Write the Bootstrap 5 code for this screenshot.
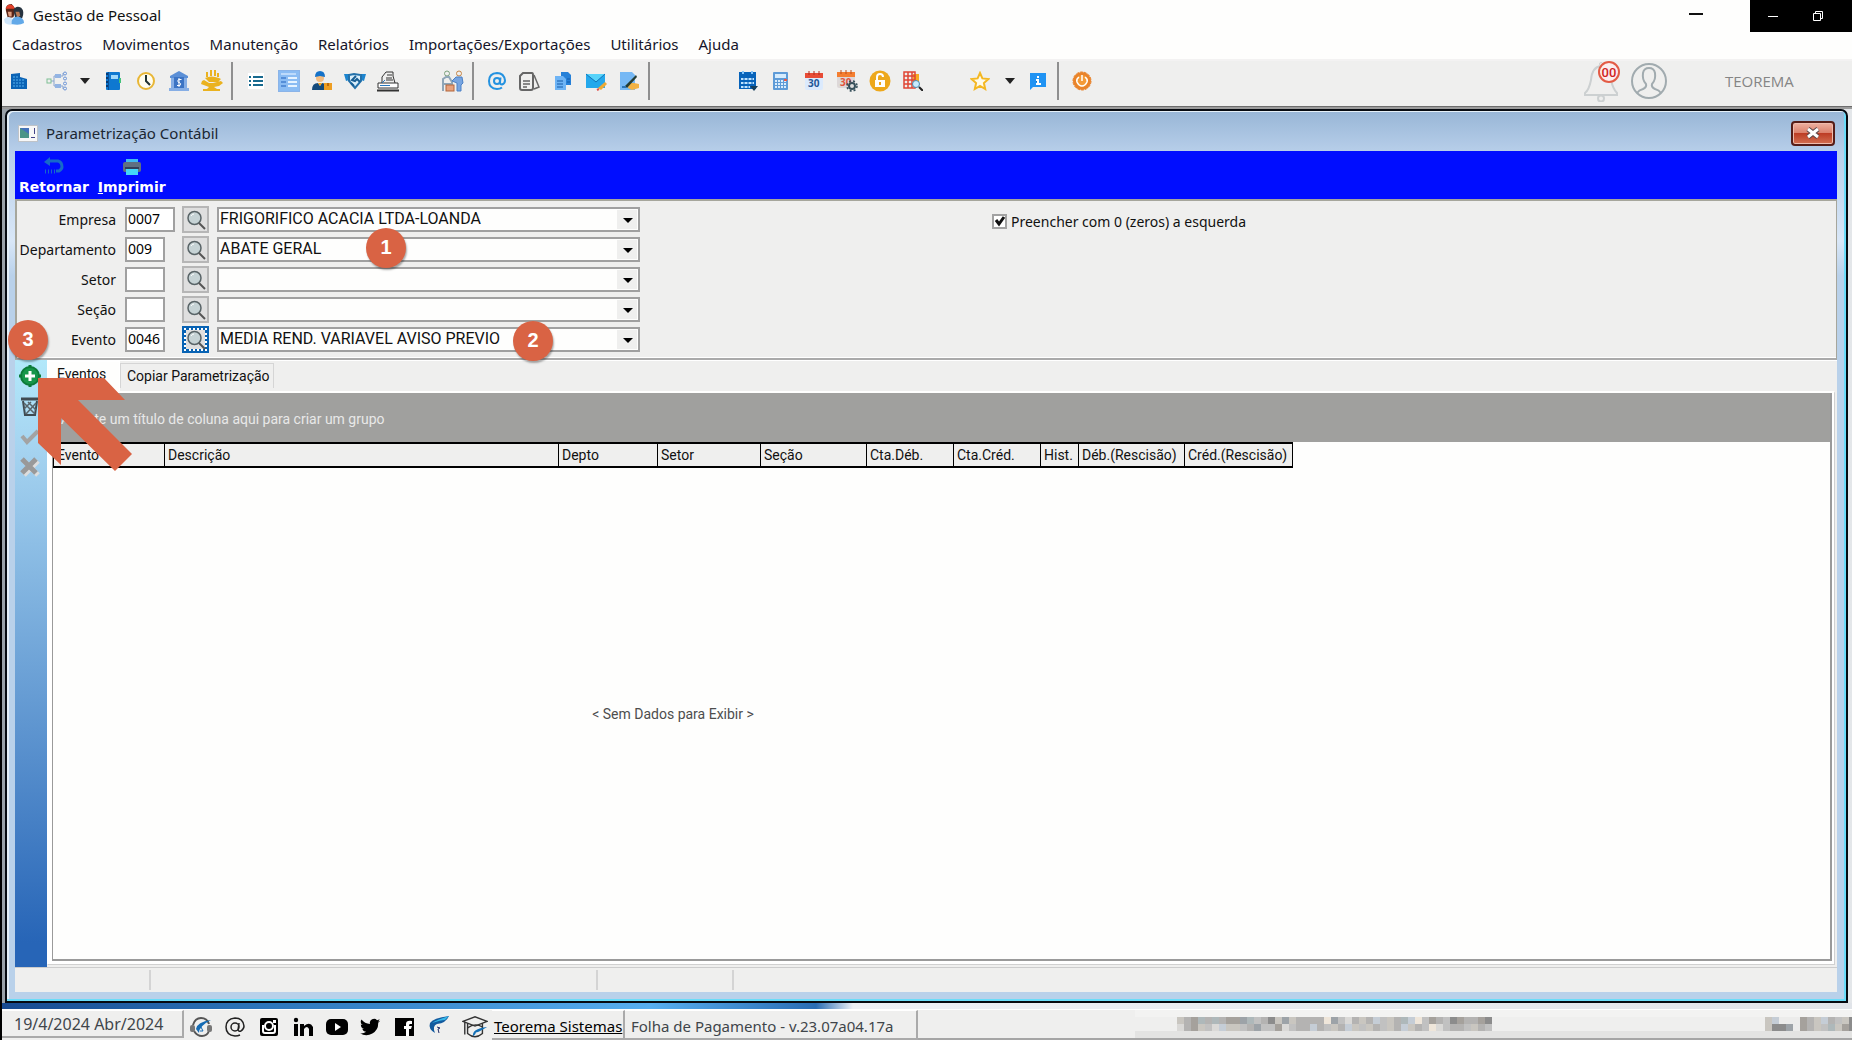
<!DOCTYPE html>
<html lang="pt-BR">
<head>
<meta charset="utf-8">
<meta name="viewport" content="width=device-width, initial-scale=1">
<title>Gestão de Pessoal</title>
<link rel="stylesheet" href="https://cdn.jsdelivr.net/npm/bootstrap@5.3.0/dist/css/bootstrap.min.css">
<script src="https://cdn.jsdelivr.net/npm/bootstrap@5.3.0/dist/js/bootstrap.bundle.min.js"></script>
<style>
  :root { --face: #efefee; --edge: #a0a0a0; --mark: #d96344; }
  body { font-family: "Noto Sans", "Open Sans", sans-serif; font-size: 15px; line-height: 20px; color: #111; background: #fefefd; border-left: 2px solid #000; }
  button { border: 0; background: none; padding: 0; color: inherit; }
  svg { display: block; flex: none; }
  .shrinkable { min-height: 0; min-width: 0; }
  .app-title { height: 32px; }
  .app-name { gap: 8px; padding: 3px 0 0 2px; }
  .dash-btn { margin: 13px 47px 0 0; }
  .win-ctl { width: 102px; height: 32px; background: #000; gap: 34px; padding-left: 18px; }
  .menu-bar { height: 27px; padding: 2px 0 0 10px; gap: 20px; color: #15152a; }
  .tool-strip { height: 47px; background: var(--face); border-top: 2px solid #f3f2f2; gap: 1px; padding: 0 0 5px 1px; }
  .tool-strip > button { width: 32px; height: 32px; display: flex; align-items: center; justify-content: center; flex: none; }
  .tool-strip > .drop-btn { width: 22px; }
  .tool-strip > .gap-xs { margin-left: 5px; }
  .tool-strip > .gap-md { margin-left: 32px; }
  .tool-strip > .gap-lg { margin-left: 75px; }
  .tool-sep { width: 2px; height: 38px; background: #8f8f8f; margin: 0 6px 0 2px; flex: none; }
  .bell-group { gap: 8px; }
  .user-tag { font-family: "Open Sans", sans-serif; color: #858585; width: 127px; margin-left: 50px; }
  .mdi-area { background: linear-gradient(90deg, #99a1a8, #e4e7ea); border-top: 1px solid #6c6c6c; padding: 2px 4px 0 3px; box-shadow: inset 0 2px #9b9b9b; }
  .mdi-win { border: 2px solid #060a10; border-radius: 7px 7px 0 0; background: linear-gradient(#98b6d6, #b8cfea 42px, #d9e7f7 130px, #b9d1ea 165px); box-shadow: inset -2px -2px #6bdcf8, inset 2px 1px #e5f0f8; padding: 0 9px 9px 8px; }
  .mdi-title { height: 40px; padding: 4px 0 0 3px; color: #1b2733; }
  .close-btn { width: 44px; height: 25px; border: 2px solid #561d17; border-radius: 4px; background: linear-gradient(#eeb1a1, #db806b 48%, #bd3d25 50%, #d37052); box-shadow: inset 0 0 0 1px #f0bcae; margin-right: 2px; }
  .cmd-bar { height: 48px; background: #000dff; color: #fff; gap: 9px; padding: 6px 4px 0; }
  .cmd-bar button { display: flex; flex-direction: column; align-items: center; gap: 1px; align-self: flex-start; font: bold 14px/18px "DejaVu Sans", sans-serif; }
  .client { background: var(--face); }
  .filter-box { border: 2px solid #a6a69c; border-right-width: 1px; border-bottom-color: #aaa; box-shadow: inset 0 -1px #fff; height: 161px; padding: 6px 0 0 0; }
  .frow { height: 25px; margin-bottom: 5px; }
  .field-label { width: 99px; text-align: right; margin-right: 9px; font-size: 14px; }
  .code-box { width: 40px; height: 25px; border: 2px solid var(--edge); padding: 0 0 2px 1px; font-size: 14px; background: #fff; border-radius: 0; }
  .code-box.wide-code { width: 50px; margin-right: -10px; }
  .find-btn { width: 27px; height: 27px; margin: 0 8px 0 17px; border: 2px solid #b6b6b6; background: #dfdfdf; display: flex; align-items: center; justify-content: center; flex: none; }
  .find-btn.on { border-color: #0863b4; outline: 2px dotted #fff; outline-offset: -4px; box-shadow: inset 0 0 0 2px #0863b4; }
  .combo { position: relative; width: 423px; height: 25px; }
  .combo select { appearance: none; width: 100%; height: 100%; border: 2px solid var(--edge); border-radius: 0; background: #fefefd; color: #111; padding: 0 24px 2px 1px; font: 16px/19px Roboto, sans-serif; opacity: 1; }
  .combo::before { content: ""; position: absolute; right: 3px; top: 3px; width: 20px; height: 19px; background: var(--face); pointer-events: none; }
  .combo::after { content: ""; position: absolute; right: 7px; top: 11px; border: 5px solid transparent; border-top: 5px solid #000; border-bottom: 0; pointer-events: none; }
  .fill-zero { margin: 4px 0 0 352px; gap: 4px; font-size: 14px; }
  .fill-zero input { display: block; appearance: none; width: 15px; height: 15px; margin: 0; border: 2px solid #a2a2a2; background: #fff; }
  .fill-zero span svg { position: absolute; left: 2px; top: 2px; pointer-events: none; }
  .side-strip { width: 32px; background: linear-gradient(#b2e8fa, #a5d3f0 15%, #2765b7 96%); padding: 5px 2px 0 0; gap: 10px; }
  .grid-text { font-family: Roboto, sans-serif; font-size: 14px; padding-bottom: 2px; }
  .tab-row { height: 31px; border-top: 1px solid #fff; }
  .tab-row button { height: 25px; border: 1px solid #d5d5d5; border-bottom: 0; padding: 0 3px 0 6px; margin-top: 2px; align-self: flex-start; }
  .tab-row .on { height: 31px; background: #fefefd; margin-top: 0; border-color: #fff; width: 73px; padding: 0 0 6px 9px; text-align: left; }
  .pane { border: 1px solid #d0d0d0; border-left-color: #fff; background: #fff; padding: 0 2px 3px 4px; border-top: 2px solid #fefefd; margin-right: 2px; }
  .grid-box { border: 2px solid #9a9a9a; border-top: 0; background: #fefefd; border-left-width: 1px; }
  .group-band { height: 49px; background: #a0a09e; color: #e8e8e8; padding: 2px 0 0 8px; }
  .data-grid { width: 1239px; border-collapse: collapse; table-layout: fixed; }
  .data-grid th { height: 24px; border: 2px solid #000; border-width: 2px 1px; background: var(--face); font-weight: 400; padding: 0 0 0 3px; white-space: nowrap; line-height: 20px; }
  .data-grid td { text-align: center; color: #4d4d4d; border: 0; }
  .win-status { height: 25px; background: var(--face); border-top: 1px solid #ccc; }
  .win-status span { border-right: 2px solid #d4d4d4; margin: 2px 0; width: 136px; }
  .win-status .wide-part { width: 447px; }
  .desk-gap { height: 6px; background: linear-gradient(90deg, #174a90, #2e78bd 15%, #58aff0 35%, #2a6db4 44%, #edf0f5 46%, #e1e4e9); }
  .foot { height: 31px; background: var(--face); border-top: 1px solid #fff; color: #40454a; }
  .foot-cell { height: 30px; border-right: 2px solid #aaa; border-bottom: 2px solid #aaa; border-top: 1px solid #fff; display: flex; align-items: center; flex: none; padding-top: 2px; }
  .date-cell { width: 182px; padding: 0 0 0 12px; font-size: 16px; height: 28px; }
  .brand-cell { width: 133px; padding-left: 2px; }
  .brand-cell a { color: #000; }
  .version-cell { width: 293px; padding-left: 6px; }
  .foot-icons { gap: 12px; width: 308px; padding: 4px 0 0 6px; }
  .foot-rest { border-bottom: 2px solid #a5a5a5; }
  .pin { position: absolute; width: 40px; height: 40px; border-radius: 50%; background: var(--mark); color: #fff; font: bold 20px/38px "Liberation Sans", sans-serif; text-align: center; box-shadow: 1px 2px 2px #0005; z-index: 5; pointer-events: none; }
  .pin-one { left: 364px; top: 228px; }
  .pin-two { left: 511px; top: 321px; }
  .pin-three { left: 6px; top: 320px; }
  .pointer-arrow { position: absolute; left: 36px; top: 378px; z-index: 4; pointer-events: none; }
</style>
</head>
<body class="vh-100 d-flex flex-column overflow-hidden position-relative">
<svg width="0" height="0" class="position-absolute"><symbol id="lens" viewBox="0 0 20 20"><circle cx="8.500" cy="8" r="6.500" fill="#c6d3d5" stroke="#596467" stroke-width="1.500"/><path d="M5 6q1-2 3-2" stroke="#fff" fill="none"/><path d="M13 13l6 6" stroke="#555" stroke-width="2"/></symbol></svg>

<header class="app-title d-flex align-items-start flex-shrink-0">
  <div class="app-name d-flex align-items-center flex-grow-1">
    <svg width="21" height="23" viewBox="0 0 22 24"><path d="M2 8Q1 1 8 1l4 5-2 9-6 1z" fill="#5a2517"/><path d="M2 5Q5-1 10 3l1 3H2z" fill="#e2402a"/><path d="M10 8Q12 2 18 5q4 4 1 11l-7 1z" fill="#26333f"/><path d="M12 9h4l1 4-3 3z" fill="#b97a55"/><path d="M4 9h4v5H5z" fill="#e0a080"/><path d="M0 17q4-4 8-1l3 6q-6 2-10-1z" fill="#cfe6fa"/><path d="M8 22q-1-7 6-8 7 1 7 7-5 3-13 1z" fill="#62a9e8"/></svg>
    <span>Gestão de Pessoal</span>
  </div>
  <button class="dash-btn" aria-label="Minimizar"><svg width="14" height="3"><path d="M0 1h14" stroke="#111" stroke-width="2"/></svg></button>
  <div class="win-ctl d-flex align-items-center">
    <button aria-label="Minimizar janela"><svg width="10" height="10"><path d="M0 5.500h10" stroke="#fff"/></svg></button>
    <button aria-label="Restaurar janela"><svg width="12" height="12" fill="none" stroke="#fff"><path d="M1.500 3.500h7v7h-7zM3.500 3.500v-2h7v7h-2"/></svg></button>
  </div>
</header>

<nav class="menu-bar d-flex align-items-start flex-shrink-0" aria-label="Menu principal">
  <button>Cadastros</button><button>Movimentos</button><button>Manutenção</button><button>Relatórios</button><button>Importações/Exportações</button><button>Utilitários</button><button>Ajuda</button>
</nav>

<div class="tool-strip d-flex align-items-center flex-shrink-0" role="toolbar" aria-label="Ferramentas">
  <button aria-label="Empresas"><svg width="18" height="18"><path d="M1 2l9-1v4l7 2v10H1z" fill="#0b63b5"/><path d="M3 5h6M3 8h12M3 11h12M3 14h12" stroke="#58b4f0" stroke-dasharray="2 1"/></svg></button>
  <button class="gap-xs" aria-label="Organograma"><svg width="22" height="20" fill="none"><path d="M5 10h3M8 10V5h3M8 10v5h3M14 5h3V2M14 15h3v3" stroke="#8aa4cc"/><rect x="1" y="8" width="4" height="4" stroke="#7ebf93"/><rect x="9" y="3" width="6" height="4" fill="#93b4e3"/><rect x="9" y="13" width="6" height="4" fill="#93b4e3"/><g stroke="#6b94d6"><circle cx="19" cy="2.500" r="1.500"/><circle cx="19" cy="7.500" r="1.500"/><circle cx="19" cy="12.500" r="1.500"/><circle cx="19" cy="17.500" r="1.500"/></g></svg></button>
  <button class="drop-btn" aria-label="Mais organogramas"><svg width="10" height="6"><path d="M0 0h10L5 6z" fill="#222"/></svg></button>
  <button aria-label="Agenda"><svg width="16" height="20"><rect x="1" y="1" width="14" height="18" rx="1" fill="#0e78d0"/><path d="M1 3h2M1 7h2M1 11h2M1 15h2" stroke="#073b75" stroke-width="2"/><path d="M3.500 1v18" stroke="#0a4f97"/><path d="M6 4h7v4H6z" fill="#9ed7fa"/><path d="M14 7h2v5h-2z" fill="#43c37a"/></svg></button>
  <button aria-label="Ponto"><svg width="20" height="20" fill="none"><circle cx="10" cy="10" r="8" fill="#fffdf0" stroke="#e8b635" stroke-width="2"/><path d="M10 4v6l4 4" stroke="#233" stroke-width="2"/></svg></button>
  <button aria-label="Banco"><svg width="20" height="22"><path d="M10 1l9 5v2H1V6z" fill="#5b8fd6"/><path d="M2 8h16v10H2zM0 18h20v3H0z" fill="#86aee5"/><rect x="5" y="7" width="10" height="11" fill="#3c74c4"/><path d="M12.500 9.500h-3q-1.500 1.500 0 3h1q2 1 .5 3H8M10 8v9" stroke="#fff" fill="none"/></svg></button>
  <button aria-label="Custos"><svg width="22" height="22" fill="#eab21f"><path d="M4 8q6-3 14 0l2 1-3 3H8zM3 10l5 3h4l8-2 2 2-4 3-5 1 3 2h3v2H2v-2h4l2-2-8-3 1-3z"/><path d="M6 2v5M10 0v6M14 0v6M17 3v4" stroke="#eab21f" stroke-width="2"/></svg></button>
  <span class="tool-sep"></span>
  <button aria-label="Lista"><svg width="16" height="16"><rect width="16" height="16" fill="#fff"/><path d="M1 4h2M1 8h2M1 12h2M5 4h10M5 8h10M5 12h10" stroke="#17698e" stroke-width="2"/></svg></button>
  <button aria-label="Formulário"><svg width="22" height="22"><rect x=".5" y=".5" width="21" height="21" fill="#8bbcf3" stroke="#8bb4e8"/><path d="M3 4h15" stroke="#bddafb" stroke-width="2"/><path d="M3 8h5M3 12h5M3 16h5" stroke="#558ed8" stroke-width="2"/><path d="M10 8h9M10 12h9M10 16h9" stroke="#e7f3ff" stroke-width="2"/></svg></button>
  <button aria-label="Funcionário"><svg width="20" height="20"><circle cx="8" cy="7" r="4" fill="#f3bd82"/><path d="M3 6q0-6 5-6t5 6l-5-1z" fill="#1572c8"/><path d="M0 19q0-7 6-7l2 3 2-3q5 0 5 7z" fill="#154a7b"/><path d="M6 12h4l-2 3z" fill="#f6a21d"/><rect x="12" y="12" width="8" height="7" fill="#ee9e22"/><path d="M15 12h2v3h-2z" fill="#bf6b0b"/></svg></button>
  <button aria-label="Acordo"><svg width="22" height="18" fill="none"><path d="M0 2h5v6l-3 1zM22 2h-5v6l3 1z" fill="#1d85cf"/><path d="M5 3l5-1 7 1v6l-6 7-6-7z" fill="#d9effc" stroke="#2371aa" stroke-width="2"/><path d="M12 4L8 8l3 1 2-2 3 3M7 11l3 3" stroke="#195f95" stroke-width="2"/></svg></button>
  <button aria-label="Relatórios impressos"><svg width="22" height="22" fill="none" stroke="#333"><path d="M5 13V7L9 2h7v4l2 7"/><path d="M10 5h5M9 8h6M9 10h7" /><path d="M1 13h20v5H1z" fill="#fff"/><path d="M0 20.500h22" stroke-width="2"/><path d="M3 15.500h10M5 13l3-3" stroke="#2878bd"/></svg></button>
  <button class="gap-md" aria-label="Rescisão"><svg width="22" height="22" fill="none"><circle cx="5" cy="3.500" r="2.500" stroke="#7ca17c"/><circle cx="17" cy="3.500" r="2.500" stroke="#c68546"/><path d="M1 21V9l3-2h3l3 5v9M1 14h8" stroke="#8fa6b8" stroke-width="2"/><path d="M14 7h6l1 6-2 2v6h-4v-8l-5-2z" fill="#77a5e1" stroke="#4c80c5"/><rect x="4" y="15" width="8" height="6" fill="#e8a17d" stroke="#b3663b"/></svg></button>
  <span class="tool-sep"></span>
  <button aria-label="E-mail"><svg width="18" height="18" viewBox="0 0 18 18" fill="none" stroke="#2492e0" stroke-width="2"><circle cx="9" cy="9" r="3"/><path d="M12.500 5.500l-.5 5q0 2 2 2 3-1 3-4Q16 1 9 1 1 1.500 1 9t8 8q3 0 5-1.500"/></svg></button>
  <button aria-label="Documentos"><svg width="22" height="20" fill="none" stroke="#666" stroke-width="2"><path d="M4 2h9q1 0 1 2v13q0 2-2 2H3q-2 0-2-2V5z"/><path d="M15 4l5 12-5 2M4 10h7M4 13h7M4 16h4" stroke-width="1.500"/></svg></button>
  <button aria-label="Copiar documentos"><svg width="18" height="20"><path d="M7 1h7l3 3v10H7z" fill="#2580d8"/><path d="M1 5h8l3 3v11H1z" fill="#6eb4f5"/><path d="M3 10h6M3 13h6M3 16h6M13 8h3M13 11h3" stroke="#145aa8"/></svg></button>
  <button aria-label="Mensagem"><svg width="22" height="20"><rect x="1" y="3" width="19" height="14" fill="#24a8ec"/><path d="M1 3h19l-9 8z" fill="#57d3fa"/><path d="M1 3l10 8 9-8" stroke="#1272b8" fill="none"/><path d="M13 17l7-6 2 2-6 6z" fill="#edaa35"/><path d="M12 19l2-1" stroke="#e3514c" stroke-width="2"/></svg></button>
  <button aria-label="Assinar"><svg width="20" height="20"><path d="M1 1h12l3 3v15H1z" fill="#76b8f4"/><path d="M10 12h5l5 1v4l-7 2-4-2z" fill="#f1b244"/><path d="M6 15L17 4l1 2L8 17z" fill="#253d35"/><path d="M3 15h4v2H3z" fill="#2b74b7"/></svg></button>
  <span class="tool-sep"></span>
  <button class="gap-lg" aria-label="Calendário"><svg width="20" height="20"><path d="M1 1h17v17H1z" fill="#0763ba"/><path d="M3 7h13v2H3zM3 11h13v2H3zM3 15h9v2H3z" fill="#bfe3ff"/><path d="M6 6v12M10 6v12M14 6v12" stroke="#0763ba"/><path d="M5 0v3M14 0v3" stroke="#82c4fa" stroke-width="2"/><path d="M12 15h8l-4 5z" fill="#17405d"/></svg></button>
  <button aria-label="Calculadora"><svg width="18" height="20"><rect x="1" y="1" width="15" height="18" rx="1" fill="#5e9bd7"/><path d="M3 3h11v4H3z" fill="#d6ecfd"/><path d="M4 9v8M7 9v8M10 9v8M13 9v8" stroke="#d9ecfc" stroke-width="2" stroke-dasharray="2 1"/><path d="M12 8h3v2h-3z" fill="#e85a48"/></svg></button>
  <button aria-label="Mês"><svg width="20" height="20"><rect x="1" y="2" width="18" height="17" rx="2" fill="#dbeafd"/><path d="M1 2h18v5H1z" fill="#e74c36"/><path d="M5 0v4M10 0v4M15 0v4" stroke="#b2291b"/><text x="4" y="16" font-family="Open Sans" font-size="10" font-weight="700" fill="#1f5797">30</text></svg></button>
  <button aria-label="Configurar mês"><svg width="22" height="22"><rect x="1" y="2" width="18" height="16" rx="2" fill="#ddd8d8"/><path d="M1 2h18v5H1z" fill="#f47e30"/><path d="M5 0v4M10 0v4M15 0v4" stroke="#bd4d17"/><text x="4" y="16" font-family="Open Sans" font-size="10" font-weight="700" fill="#e3553b">30</text><circle cx="16" cy="16" r="3" fill="#ddd" stroke="#37505b" stroke-width="2"/><circle cx="16" cy="16" r="5" fill="none" stroke="#37505b" stroke-width="1.500" stroke-dasharray="2 2"/></svg></button>
  <button aria-label="Liberar"><svg width="22" height="22"><circle cx="11" cy="11" r="10.500" fill="#eda81c"/><rect x="6" y="10" width="10" height="7" fill="#fff"/><path d="M8 10V7q0-3 3-3t3 3" fill="none" stroke="#fff" stroke-width="2"/><path d="M11 12v3" stroke="#eda81c" stroke-width="2"/></svg></button>
  <button aria-label="Consultar tabela"><svg width="20" height="20" fill="none"><path d="M10 3h6v8h-6z" fill="#f7aa23"/><path d="M1 1h11v16H1zM1 5h11M1 9h11M1 13h11M5 1v16M9 1v16" stroke="#e04635" stroke-width="1.500"/><circle cx="13" cy="13" r="3.500" fill="#c8ecff" stroke="#488aaf"/><path d="M16 16l4 4" stroke="#222" stroke-width="2"/></svg></button>
  <button class="gap-md ps-1" aria-label="Favoritos"><svg width="20" height="20" viewBox="0 0 20 20"><path d="M10 2l2.400 5.400 6 .6-4.500 4 1.300 6L10 15l-5.200 3 1.300-6L1.600 8l6-.6z" fill="#fffbe9" stroke="#f4b822" stroke-width="2"/></svg></button>
  <button class="drop-btn ms-1" aria-label="Mais favoritos"><svg width="10" height="6"><path d="M0 0h10L5 6z" fill="#222"/></svg></button>
  <button aria-label="Informações"><svg width="18" height="18"><path d="M1 1h16v14H4l-3 3z" fill="#2093f3"/><path d="M9 4v2M7 8h2v4M7 12h5" stroke="#fff" stroke-width="2"/></svg></button>
  <span class="tool-sep"></span>
  <button aria-label="Sair"><svg width="20" height="20" fill="none"><circle cx="10" cy="10" r="9" fill="#e9832a" stroke="#e9832a" stroke-dasharray="3 1"/><circle cx="10" cy="10" r="6" fill="#f49a37"/><path d="M7 6q-3 2-2 5 2 4 5 4t5-4q1-3-2-5M10 4v6" stroke="#fff" stroke-width="1.500"/></svg></button>
  <div class="bell-group d-flex align-items-center ms-auto">
    <button aria-label="Notificações"><svg width="40" height="42" fill="none"><path d="M2 33q4-3 6-13Q9 7 18 6q9 1 10 14 2 9 6 13v2H2z" stroke="#ccd0d1" stroke-width="2"/><circle cx="18" cy="38.500" r="3" stroke="#ccd0d1" stroke-width="2"/><circle cx="18" cy="4" r="1.500" stroke="#ccd0d1"/><circle cx="26" cy="12" r="10" fill="#fbeeee" stroke="#e35b45" stroke-width="2"/><text x="26" y="17" text-anchor="middle" font-family="Roboto" font-size="13" font-weight="500" fill="#d01f22">00</text></svg></button>
    <button aria-label="Usuário"><svg width="36" height="36" fill="none" stroke="#a1abaf" stroke-width="2"><circle cx="18" cy="18" r="17"/><path d="M6 30q2-3 6-4 4-2 3-5-4-4-3-11 1-5 6-5t6 5q1 7-3 11-1 3 3 5 4 1 6 4"/></svg></button>
    <span class="user-tag">TEOREMA</span>
  </div>
</div>

<main class="mdi-area shrinkable d-flex flex-column flex-grow-1">
  <section class="mdi-win shrinkable d-flex flex-column flex-grow-1">
    <div class="mdi-title d-flex align-items-center flex-shrink-0">
      <svg width="20" height="17" class="me-2"><rect x=".5" y=".5" width="19" height="16" fill="#f8f8f8" stroke="#bfc3c8"/><rect x="2" y="3" width="9" height="10" fill="#4c9587"/><path d="M2 3l9 6V3z" fill="#4471b9"/><path d="M16.500 3v6M13 12.500h4" stroke="#448"/></svg>
      <span class="flex-grow-1">Parametrização Contábil</span>
      <button class="close-btn d-flex align-items-center justify-content-center" aria-label="Fechar"><svg width="16" height="12" fill="none"><path d="M3 2l10 8M13 2L3 10" stroke="#59474a" stroke-width="5"/><path d="M3 2l10 8M13 2L3 10" stroke="#fff" stroke-width="3"/></svg></button>
    </div>
    <div class="cmd-bar d-flex flex-shrink-0">
      <button><svg width="20" height="20" fill="none"><path d="M5 4h9q4 1 4 6 0 2-3 4h-3" stroke="#176ac9" stroke-width="3"/><path d="M0 5l6-5v9z" fill="#176ac9"/><path d="M1 14.500h10" stroke="#176ac9" stroke-width="4" stroke-dasharray="1 2"/></svg><span>Retornar</span></button>
      <button><svg width="20" height="20"><path d="M4 2h12v6H4z" fill="#41b9ef"/><rect x="1" y="5" width="18" height="10" rx="2" fill="#607080"/><path d="M4 12h12v6H4z" fill="#43d6f8"/><path d="M3 11h14" stroke="#333f58" stroke-width="2"/></svg><span><u>I</u>mprimir</span></button>
    </div>

    <div class="client shrinkable d-flex flex-column flex-grow-1">
      <form class="filter-box flex-shrink-0">
        <div class="frow d-flex align-items-center">
          <label class="field-label" for="emp">Empresa</label><input id="emp" class="code-box wide-code" value="0007">
          <button type="button" class="find-btn" aria-label="Buscar empresa"><svg width="20" height="20"><use href="#lens"/></svg></button>
          <div class="combo"><select aria-label="Nome da empresa"><option>FRIGORIFICO ACACIA LTDA-LOANDA</option></select></div>
          <div class="fill-zero d-flex align-items-center"><span class="position-relative"><input type="checkbox" id="zero" checked><svg width="12" height="12" fill="none"><path d="M2 4l3 4 5-7" stroke="#111" stroke-width="3"/></svg></span><label for="zero">Preencher com 0 (zeros) a esquerda</label></div>
        </div>
        <div class="frow d-flex align-items-center">
          <label class="field-label" for="dep">Departamento</label><input id="dep" class="code-box" value="009">
          <button type="button" class="find-btn" aria-label="Buscar departamento"><svg width="20" height="20"><use href="#lens"/></svg></button>
          <div class="combo"><select aria-label="Nome do departamento"><option>ABATE GERAL</option></select></div>
        </div>
        <div class="frow d-flex align-items-center">
          <label class="field-label" for="set">Setor</label><input id="set" class="code-box">
          <button type="button" class="find-btn" aria-label="Buscar setor"><svg width="20" height="20"><use href="#lens"/></svg></button>
          <div class="combo"><select aria-label="Nome do setor"><option></option></select></div>
        </div>
        <div class="frow d-flex align-items-center">
          <label class="field-label" for="sec">Seção</label><input id="sec" class="code-box">
          <button type="button" class="find-btn" aria-label="Buscar seção"><svg width="20" height="20"><use href="#lens"/></svg></button>
          <div class="combo"><select aria-label="Nome da seção"><option></option></select></div>
        </div>
        <div class="frow d-flex align-items-center">
          <label class="field-label" for="eve">Evento</label><input id="eve" class="code-box" value="0046">
          <button type="button" class="find-btn on" aria-label="Buscar evento"><svg width="20" height="20"><use href="#lens"/></svg></button>
          <div class="combo"><select aria-label="Nome do evento"><option>MEDIA REND. VARIAVEL AVISO PREVIO</option></select></div>
        </div>
      </form>

      <div class="shrinkable d-flex flex-grow-1">
        <aside class="side-strip d-flex flex-column align-items-center flex-shrink-0">
          <button aria-label="Incluir"><svg width="22" height="22"><circle cx="11" cy="11" r="9" fill="#17964a" stroke="#0c7a38" stroke-width="2"/><path d="M11 0v2M11 20v2M0 11h2M20 11h2" stroke="#0c7a38" stroke-width="3"/><path d="M11 6v10M6 11h10" stroke="#fff" stroke-width="3"/></svg></button>
          <button aria-label="Excluir"><svg width="20" height="20" fill="none"><path d="M1 2h18" stroke="#404b51" stroke-width="3"/><path d="M3 4l2 14h10l2-14" stroke="#404b51" stroke-width="2"/><path d="M4 6l11 11M8 5l8 8M16 6L6 17M11 5l-7 7" stroke="#59646a" stroke-width="1.500"/></svg></button>
          <button aria-label="Confirmar"><svg width="20" height="20" fill="none"><path d="M2 9l5 6L18 4" stroke="#a3a3a3" stroke-width="4"/></svg></button>
          <button aria-label="Cancelar"><svg width="20" height="20" fill="none"><path d="M4 4l14 14M18 4L4 18" stroke="#ddd" stroke-width="5"/><path d="M2 2l14 14M16 2L2 16" stroke="#999" stroke-width="5"/></svg></button>
        </aside>
        <div class="grid-text shrinkable d-flex flex-column flex-grow-1">
          <div class="tab-row d-flex flex-shrink-0" role="tablist">
            <button class="on" role="tab" aria-selected="true">Eventos</button><button role="tab" aria-selected="false">Copiar Parametrização</button>
          </div>
          <div class="pane shrinkable d-flex flex-column flex-grow-1">
            <div class="grid-box shrinkable d-flex flex-column flex-grow-1">
              <div class="group-band d-flex align-items-center flex-shrink-0">Arraste um título de coluna aqui para criar um grupo</div>
              <table class="data-grid flex-grow-1">
                <colgroup><col style="width:111px"><col style="width:394px"><col style="width:99px"><col style="width:103px"><col style="width:106px"><col style="width:87px"><col style="width:87px"><col style="width:38px"><col style="width:106px"><col style="width:108px"></colgroup>
                <thead><tr><th>Evento</th><th>Descrição</th><th>Depto</th><th>Setor</th><th>Seção</th><th>Cta.Déb.</th><th>Cta.Créd.</th><th>Hist.</th><th>Déb.(Rescisão)</th><th>Créd.(Rescisão)</th></tr></thead>
                <tbody><tr><td colspan="10">&lt; Sem Dados para Exibir &gt;</td></tr></tbody>
              </table>
            </div>
          </div>
        </div>
      </div>
      <div class="win-status d-flex flex-shrink-0"><span></span><span class="wide-part"></span><span></span></div>
    </div>
  </section>
</main>
<div class="desk-gap flex-shrink-0"></div>

<footer class="foot d-flex align-items-start flex-shrink-0">
  <div class="foot-cell date-cell">19/4/2024 Abr/2024</div>
  <div class="foot-icons d-flex align-items-center h-100 flex-shrink-0">
    <a href="#" aria-label="Suporte"><svg width="22" height="22" fill="none"><path d="M3 9Q5 2 11 2t8 6M4 15q3 5 8 5 5 0 7-5" stroke="#555" stroke-width="2"/><rect x="0" y="9" width="5" height="7" rx="2" fill="#777"/><rect x="17" y="9" width="5" height="7" rx="2" fill="#777"/><path d="M21 4Q7 6 6 13l3 4q0-7 12-13z" fill="#146bb4"/><path d="M11 11l2 4h-3" stroke="#146bb4"/></svg></a>
    <a href="#" aria-label="E-mail"><svg width="22" height="22" fill="none" stroke="#222" stroke-width="1.500"><circle cx="11" cy="11" r="4"/><path d="M15 7l-1 7q1 2 3 1 3-2 3-5-1-8-9-8-9 1-9 9t9 9q3 0 5-1"/></svg></a>
    <a href="#" aria-label="Instagram"><svg width="22" height="22" fill="none"><rect x="2" y="2" width="18" height="18" rx="2" fill="#000"/><path d="M5 9v6q0 2 2 2h8q2 0 2-2V9" stroke="#fff" stroke-width="2"/><circle cx="11" cy="10" r="4" fill="#000" stroke="#fff" stroke-width="2"/><rect x="15" y="4" width="3" height="3" fill="#fff"/></svg></a>
    <a href="#" aria-label="LinkedIn"><svg width="22" height="22"><path d="M2 8h4v12H2zM8 8h4v2q6-5 9 1v9h-4v-7q-2-4-5 0v7H8z" fill="#000"/><circle cx="4" cy="4" r="2.200" fill="#000"/></svg></a>
    <a href="#" aria-label="YouTube"><svg width="22" height="22"><rect x="0" y="3" width="22" height="16" rx="5" fill="#000"/><path d="M9 7l6 4-6 4z" fill="#fff"/></svg></a>
    <a href="#" aria-label="Twitter"><svg width="22" height="22" viewBox="0 0 26 24"><path d="M23.900 4.600a10 10 0 0 1-2.800.8 5 5 0 0 0 2.200-2.700 10 10 0 0 1-3.100 1.200 4.900 4.900 0 0 0-8.400 4.500A14 14 0 0 1 1.700 3.200a4.900 4.900 0 0 0 1.500 6.500 5 5 0 0 1-2.200-.6 4.900 4.900 0 0 0 3.900 4.900 5 5 0 0 1-2.200.1 4.900 4.900 0 0 0 4.600 3.400A10 10 0 0 1 0 19.500 14 14 0 0 0 21.500 7a10 10 0 0 0 2.400-2.400z"/></svg></a>
    <a href="#" aria-label="Facebook"><svg width="22" height="22"><rect x="1" y="2" width="19" height="18" fill="#000"/><path d="M12 20v-7h-2v-3h2V8q0-4 6-3v3h-2q-1 0-1 2h3l-1 3h-2v7z" fill="#fff"/></svg></a>
    <a href="#" aria-label="Teorema"><svg width="22" height="24"><path d="M21 1Q5 3 2 8q-2 6 5 10-3-7 2-9Q18 8 21 1z" fill="#135a9e"/><path d="M21 1Q8 5 4 8q9-3 13-3z" fill="#34b7e9"/><path d="M9 12l3 1-2 1 1 4" stroke="#222f6b" fill="none"/></svg></a>
    <a href="#" aria-label="Cursos"><svg width="26" height="24" viewBox="0 0 28 24" fill="none" stroke="#333" stroke-width="1.500"><path d="M1 6l13-5 13 5-13 5zM6 8v11q8 7 16 0V8M3 7v13"/><path d="M6 13q8-6 16-1"/><path d="M27 12q-17 2-15 10 3-2 3-4 4-1 12-6z" fill="#1470b6" stroke="none"/></svg></a>
  </div>
  <div class="foot-cell brand-cell"><a href="#">Teorema Sistemas</a></div>
  <div class="foot-cell version-cell">Folha de Pagamento - v.23.07a04.17a</div>
  <div class="foot-rest d-flex flex-grow-1 align-self-stretch justify-content-end">
    <svg id="mosaic" width="717" height="28" shape-rendering="crispEdges"><path d="M0 0h717v7H0z" fill="#f3f3f2"/><path d="M0 21h717v7H0z" fill="#e3e3e2"/></svg>
  </div>
</footer>

<span class="pin pin-one">1</span>
<span class="pin pin-two">2</span>
<span class="pin pin-three">3</span>
<svg class="pointer-arrow" width="94" height="94"><path d="M0 0h66l21 22H40l54 54-17 17-54-53v47L0 65z" fill="#d96344"/></svg>

<script>
  // Censored status text: two rows of 7px tiles
  const shades = {a:'#b4b3b2', b:'#a5a19c', c:'#c9c6c0', d:'#8c8c8c', e:'#aeb8ba', f:'#dad9d7', g:'#c5cdd6', h:'#efe6da', i:'#c1c1c1', j:'#9da3a8', k:'#ececeb'};
  const rows = ['cabeaeabbjeiadcjcaaaahjifacagicaeghibaidbaabd', 'fabcifgcciajiibfiaagaicagcicaicagcaihfiaaicai'];
  const tail = ['cgkkkbacgaicd', 'cddjkbaciecbd'];
  const svg = document.getElementById('mosaic');
  const tiles = (list, x0) => list.forEach((row, r) => [...row].forEach((s, c) => {
    const t = document.createElementNS('http://www.w3.org/2000/svg', 'rect');
    t.setAttribute('x', x0 + c * 7); t.setAttribute('y', 7 + r * 7);
    t.setAttribute('width', 7); t.setAttribute('height', 7); t.setAttribute('fill', shades[s]);
    svg.appendChild(t);
  }));
  tiles(rows, 42);
  tiles(tail, 630);
</script>
</body>
</html>
